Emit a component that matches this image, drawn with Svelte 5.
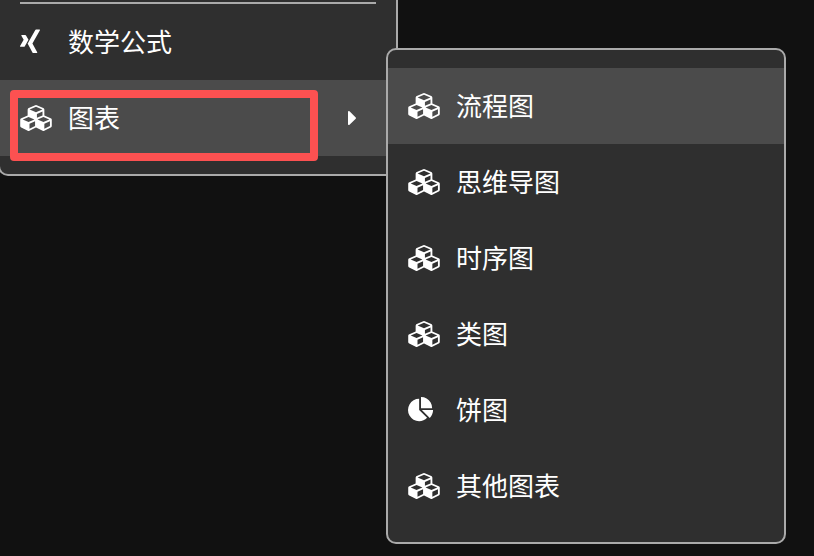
<script>
    const icons = {
        xing: {
            box: '192 0 1408 1792',
            width: 20,
            path: 'M789 735q-10 18-257 456-27 46-65 46h-239q-21 0-31-17t0-36l253-448q1 0 0-1l-161-279q-12-22-1-37 9-15 32-15h239q40 0 66 45zm806-701q11 16 0 37l-528 934v1l336 615q11 20 1 37-10 15-32 15h-239q-42 0-66-45l-339-622q18-32 531-942 25-45 64-45h241q22 0 31 15z'
        },
        cubes: {
            box: '0 0 2176 1792',
            width: 32,
            path: 'M640 1632l384-192v-314l-384 164v342zm-64-454l404-173-404-173-404 173zm1088 454l384-192v-314l-384 164v342zm-64-454l404-173-404-173-404 173zm-448-293l384-165v-266l-384 164v267zm-64-379l441-189-441-189-441 189zm1088 518v416q0 36-19 67t-52 47l-448 224q-25 14-57 14t-57-14l-448-224q-4-2-7-4-2 2-7 4l-448 224q-25 14-57 14t-57-14l-448-224q-33-16-52-47t-19-67v-416q0-38 21.500-70t56.500-48l434-186v-400q0-38 21.500-70t56.500-48l448-192q23-10 50-10t50 10l448 192q35 16 56.500 48t21.500 70v400l434 186q36 16 57 48t21 70z'
        },
        pie: {
            box: '0 0 1792 1792',
            width: 26,
            path: 'M768 890l546 546q-106 108-247.500 168t-298.500 60q-209 0-385.500-103t-279.500-279.500-103-385.500 103-385.500 279.500-279.500 385.500-103v762zm187 6h773q0 157-60 298.500t-168 247.500zm709-128h-768v-768q209 0 385.500 103t279.500 279.500 103 385.500z'
        },
        caret: {
            box: '576 0 576 1792',
            width: 8,
            path: 'M1152 896q0 26-19 45l-448 448q-19 19-45 19t-45-19-19-45v-896q0-26 19-45t45-19 45 19l448 448q19 19 19 45z'
        }
    };

    const charts = [
        { name: '流程图', icon: 'cubes' },
        { name: '思维导图', icon: 'cubes' },
        { name: '时序图', icon: 'cubes' },
        { name: '类图', icon: 'cubes' },
        { name: '饼图', icon: 'pie' },
        { name: '其他图表', icon: 'cubes' }
    ];

    let active = '流程图';
</script>

{#snippet icon(name)}
    <svg viewBox={icons[name].box} width={icons[name].width} height="26" aria-hidden="true">
        <path d={icons[name].path} />
    </svg>
{/snippet}

<main>
    <div class="menu">
        <hr />
        <button class="item">
            <span class="icon">{@render icon('xing')}</span>
            <span class="label">数学公式</span>
        </button>
        <div class="parent">
            <button class="item active" aria-haspopup="true" aria-expanded="true">
                <span class="icon">{@render icon('cubes')}</span>
                <span class="label">图表</span>
                {@render icon('caret')}
            </button>
            <div class="highlight"></div>

            <div class="menu submenu">
                {#each charts as chart}
                    <button
                        class="item"
                        class:active={active === chart.name}
                        onmouseenter={() => (active = chart.name)}
                    >
                        <span class="icon">{@render icon(chart.icon)}</span>
                        <span class="label">{chart.name}</span>
                    </button>
                {/each}
            </div>
        </div>
    </div>
</main>

<style>
    :global(body) {
        background: #111;
    }

    main {
        min-height: 100vh;
        overflow: hidden;
    }

    .menu {
        box-sizing: border-box;
        width: 400px;
        margin-left: -2px;
        padding: 2px 0 18px;
        background: #2f2f2f;
        border: 2px solid #aaa;
        border-top: none;
        border-radius: 0 0 10px 10px;
    }

    hr {
        height: 2px;
        margin: 0 20px;
        border: none;
        background: #aaa;
    }

    .item {
        display: flex;
        align-items: center;
        box-sizing: border-box;
        width: 100%;
        height: 76px;
        padding: 0 40px 0 20px;
        border: none;
        background: transparent;
        color: #fff;
        font-family: "Noto Sans CJK SC", sans-serif;
        font-size: 26px;
        line-height: 38px;
        text-align: left;
        cursor: pointer;
    }

    .item.active {
        background: #4b4b4b;
    }

    .icon {
        display: flex;
        width: 48px;
    }

    .label {
        flex: 1;
        padding-bottom: 2px;
    }

    svg {
        fill: currentColor;
    }

    .parent {
        position: relative;
    }

    .highlight {
        position: absolute;
        top: 10px;
        right: 78px;
        bottom: -5px;
        left: 10px;
        border: 8px solid #fc5151;
        border-radius: 4px;
        pointer-events: none;
    }

    .submenu {
        position: absolute;
        top: -32px;
        left: 386px;
        margin: 0;
        padding: 18px 0;
        border: 2px solid #aaa;
        border-radius: 10px;
    }
</style>
